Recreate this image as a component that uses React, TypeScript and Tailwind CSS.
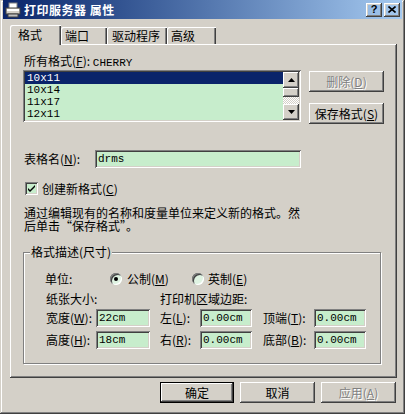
import React from "react";

const raised =
  "shadow-[inset_-1px_-1px_#404040,inset_1px_1px_#ffffff,inset_-2px_-2px_#808080,inset_2px_2px_#d4d0c8]";
const sunken =
  "shadow-[inset_1px_1px_#808080,inset_-1px_-1px_#ffffff,inset_2px_2px_#404040,inset_-2px_-2px_#d4d0c8]";

function Btn({ children, disabled, primary }: { children: React.ReactNode; disabled?: boolean; primary?: boolean }) {
  if (primary) {
    return (
      <div className="w-[74px] h-[21px] border border-black flex">
        <div className={`flex-1 flex items-center justify-center ${raised}`}>{children}</div>
      </div>
    );
  }
  return (
    <div
      className={`w-[75px] h-[21px] flex items-center justify-center ${raised} ${
        disabled ? "text-[#808080] [text-shadow:1px_1px_0_#ffffff]" : ""
      }`}
    >
      {children}
    </div>
  );
}

function Field({ value, width }: { value: string; width: string }) {
  return (
    <div className={`${width} h-[18px] bg-[#c7edcc] flex items-center pl-[3px] ${sunken}`}>
      <span className="font-['Liberation_Mono',monospace] text-[11px] leading-[14px]">{value}</span>
    </div>
  );
}

function Radio({ checked }: { checked?: boolean }) {
  return (
    <div className="w-[12px] h-[12px] rounded-full bg-[#dff3e2] shadow-[inset_1px_1px_#808080,inset_-1px_-1px_#ffffff,inset_2px_2px_#404040] flex items-center justify-center">
      {checked && <div className="w-[4px] h-[4px] rounded-full bg-black" />}
    </div>
  );
}

function Arrow({ up }: { up?: boolean }) {
  return (
    <div className={`w-[16px] h-[16px] bg-[#d4d0c8] flex items-center justify-center ${raised}`}>
      <svg width="7" height="4" viewBox="0 0 7 4">
        <path d={up ? "M3.5 0 L7 4 L0 4 Z" : "M0 0 L7 0 L3.5 4 Z"} fill="#000" />
      </svg>
    </div>
  );
}

export default function App() {
  const rows = ["10x11", "10x14", "11x17", "12x11"];
  return (
    <div className="w-[405px] h-[414px] bg-[#d4d0c8] flex flex-col text-[12px] text-black font-['Noto_Sans_CJK_SC',sans-serif] shadow-[inset_-1px_-1px_#404040,inset_1px_1px_#d4d0c8,inset_-2px_-2px_#808080,inset_2px_2px_#ffffff] overflow-hidden">
      {/* Title bar */}
      <div className="mx-[3px] h-[19px] bg-gradient-to-r from-[#0a246a] to-[#a6caf0] flex items-center pl-[2px] pr-[2px]">
        <svg width="16" height="16" viewBox="0 0 16 16">
          <rect x="4" y="1" width="8" height="6" fill="#fff" stroke="#808080" />
          <rect x="1" y="6" width="14" height="6" fill="#d4d0c8" stroke="#404040" />
          <rect x="2" y="7" width="12" height="2" fill="#ffffff" />
          <rect x="3" y="12" width="10" height="3" fill="#c0c0c0" stroke="#404040" />
        </svg>
        <span className="ml-[3px] text-white font-bold leading-[14px] tracking-[0.5px]">打印服务器 属性</span>
        <div className="ml-auto flex gap-[2px]">
          <div className={`w-[16px] h-[14px] flex items-center justify-center font-bold text-[11px] leading-none font-['Liberation_Sans',sans-serif] ${raised}`}>?</div>
          <div className={`w-[16px] h-[14px] flex items-center justify-center ${raised}`}>
            <svg width="8" height="7" viewBox="0 0 8 7">
              <path d="M0.5 0.5 L7.5 6.5 M7.5 0.5 L0.5 6.5" stroke="#000" strokeWidth="1.6" />
            </svg>
          </div>
        </div>
      </div>

      {/* Tabs */}
      <div className="mt-[6px] ml-[10px] h-[19px] flex items-end">
        <div className="relative z-10 w-[51px] h-[20px] -mb-[1px] bg-[#d4d0c8] pl-[8px] pt-[3px] leading-[14px] rounded-tl-[2px] shadow-[inset_1px_1px_#ffffff,inset_-1px_0_#404040,inset_-2px_0_#808080]">
          格式
        </div>
        <div className="w-[46px] h-[17px] pl-[4px] pt-[2px] leading-[14px] rounded-tl-[2px] shadow-[inset_1px_1px_#ffffff,inset_-1px_0_#404040,inset_-2px_0_#808080]">
          端口
        </div>
        <div className="w-[60px] h-[17px] pl-[5px] pt-[2px] leading-[14px] rounded-tl-[2px] shadow-[inset_1px_1px_#ffffff,inset_-1px_0_#404040,inset_-2px_0_#808080]">
          驱动程序
        </div>
        <div className="w-[49px] h-[17px] pl-[4px] pt-[2px] leading-[14px] rounded-tl-[2px] shadow-[inset_1px_1px_#ffffff,inset_-1px_0_#404040,inset_-2px_0_#808080]">
          高级
        </div>
      </div>

      {/* Tab panel */}
      <div className={`ml-[10px] w-[387px] h-[334px] flex flex-col pt-[10px] px-[13px] ${raised}`}>
        <div className="ml-[1px] h-[13px] leading-[13px] whitespace-nowrap">
          所有格式(<u>F</u>):{" "}
          <span className="font-['Liberation_Mono',monospace] text-[11px]">CHERRY</span>
        </div>

        <div className="mt-[3px] flex">
          <div className={`w-[280px] h-[52px] bg-[#c7edcc] p-[2px] flex ${sunken}`}>
            <div className="flex-1 overflow-hidden font-['Liberation_Mono',monospace] text-[11px]">
              {rows.map((r, i) => (
                <div
                  key={r}
                  className={`h-[12px] leading-[12px] pl-[2px] ${i === 0 ? "bg-[#0a246a] text-white" : ""}`}
                >
                  {r}
                </div>
              ))}
            </div>
            <div className="w-[16px] flex flex-col">
              <Arrow up />
              <div className={`h-[9px] bg-[#d4d0c8] ${raised}`} />
              <div className="flex-1 bg-[repeating-conic-gradient(#ffffff_0_25%,#d4d0c8_0_50%)] bg-[length:2px_2px]" />
              <Arrow />
            </div>
          </div>
          <div className="ml-[8px] mt-[1px] flex flex-col gap-[11px]">
            <Btn disabled>
              删除(<u>D</u>)
            </Btn>
            <Btn>
              保存格式(<u>S</u>)
            </Btn>
          </div>
        </div>

        <div className="mt-[26px] h-[18px] flex items-center">
          <span className="ml-[1px] w-[71px]">
            表格名(<u>N</u>):
          </span>
          <Field value="drms" width="w-[206px]" />
        </div>

        <div className="mt-[14px] h-[13px] flex items-center">
          <div className={`ml-[2px] w-[13px] h-[13px] bg-[#c7edcc] flex items-center justify-center ${sunken}`}>
            <svg width="7" height="7" viewBox="0 0 7 7">
              <path d="M0 3 L0 5 L2 7 L7 2 L7 0 L2 5 Z" fill="#000" />
            </svg>
          </div>
          <span className="ml-[4px] leading-[13px]">
            创建新格式(<u>C</u>)
          </span>
        </div>

        <div className="mt-[11px] ml-[1px] flex flex-col whitespace-nowrap">
          <div className="h-[13px] leading-[13px]">通过编辑现有的名称和度量单位来定义新的格式。然</div>
          <div className="h-[13px] leading-[13px]">后单击“保存格式”。</div>
        </div>

        {/* Group box */}
        <div className="relative mt-[20px] w-[358px] h-[112px] border border-[#808080] shadow-[inset_1px_1px_#ffffff,1px_1px_#ffffff] flex flex-col">
          <span className="absolute -top-[8px] left-[6px] px-[1px] bg-[#d4d0c8] leading-[14px]">格式描述(尺寸)</span>

          <div className="mt-[19px] ml-[21px] h-[13px] flex items-center leading-[13px]">
            <span className="w-[65px]">单位:</span>
            <Radio checked />
            <span className="ml-[5px] w-[65px]">
              公制(<u>M</u>)
            </span>
            <Radio />
            <span className="ml-[4px]">
              英制(<u>E</u>)
            </span>
          </div>

          <div className="mt-[7px] ml-[22px] h-[13px] flex items-center leading-[13px]">
            <span className="w-[114px]">纸张大小:</span>
            <span>打印机区域边距:</span>
          </div>

          <div className="mt-[4px] ml-[22px] h-[18px] flex items-center">
            <span className="w-[50px]">
              宽度(<u>W</u>):
            </span>
            <Field value="22cm" width="w-[54px]" />
            <span className="ml-[10px] w-[40px]">
              左(<u>L</u>):
            </span>
            <Field value="0.00cm" width="w-[52px]" />
            <span className="ml-[11px] w-[51px]">
              顶端(<u>T</u>):
            </span>
            <Field value="0.00cm" width="w-[52px]" />
          </div>

          <div className="mt-[4px] ml-[22px] h-[18px] flex items-center">
            <span className="w-[50px]">
              高度(<u>H</u>):
            </span>
            <Field value="18cm" width="w-[54px]" />
            <span className="ml-[10px] w-[40px]">
              右(<u>R</u>):
            </span>
            <Field value="0.00cm" width="w-[52px]" />
            <span className="ml-[11px] w-[51px]">
              底部(<u>B</u>):
            </span>
            <Field value="0.00cm" width="w-[52px]" />
          </div>
        </div>
      </div>

      {/* Dialog buttons */}
      <div className="mt-[4px] pr-[9px] flex justify-end gap-[6px]">
        <Btn primary>确定</Btn>
        <Btn>取消</Btn>
        <Btn disabled>
          应用(<u>A</u>)
        </Btn>
      </div>
    </div>
  );
}
